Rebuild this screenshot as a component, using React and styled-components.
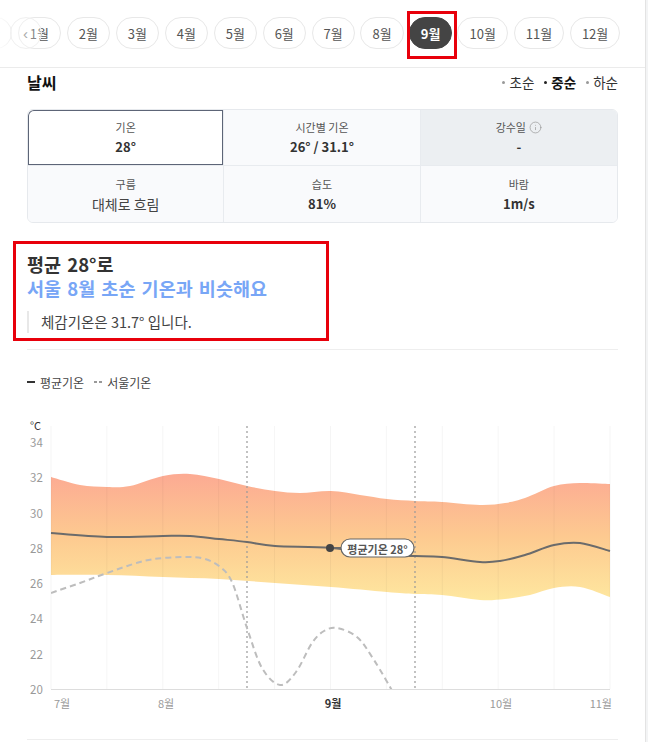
import styled, { createGlobalStyle } from "styled-components";
import { Info } from "lucide-react";

const GlobalStyle = createGlobalStyle`
  body {
    margin: 0;
    background: #f3f4f5;
    font-family: "Noto Sans CJK KR", "Noto Sans", sans-serif;
    color: #333;
  }
`;

const Page = styled.div`
  width: 645px;
  height: 742px;
  overflow: hidden;
  background: #fff;
  border-right: 1px solid #e3e3e3;
`;

const MonthBar = styled.div`
  position: relative;
  height: 67px;
  border-bottom: 1px solid #ebebeb;
  overflow: hidden;
`;

const ChipRow = styled.div`
  display: flex;
  gap: 5.6px;
  padding-top: 17px;
  margin-left: -36px;
`;

const Chip = styled.button`
  position: relative;
  flex: none;
  height: 32px;
  padding: 0 ${(p) => (p.$active ? "10.4px" : "11.1px")};
  border-radius: 16px;
  border: 1px solid ${(p) => (p.$active ? "#444" : "#e8e8e8")};
  background: ${(p) => (p.$active ? "#444" : "#fff")};
  color: ${(p) => (p.$active ? "#fff" : "#555")};
  font-family: inherit;
  font-size: 13px;
  font-weight: ${(p) => (p.$active ? 700 : 400)};
  line-height: 1;

  ${(p) =>
    p.$marked &&
    `&::after {
      content: "";
      position: absolute;
      top: -7px;
      bottom: -11px;
      left: -3px;
      right: -6px;
      border: 3px solid #e8000b;
    }`}
`;

const PrevButton = styled.button`
  position: absolute;
  left: 0;
  top: 17px;
  width: 42px;
  height: 32px;
  padding: 0 0 0 23px;
  border: none;
  background: linear-gradient(to right, rgba(255, 255, 255, 0.8) 0, rgba(255, 255, 255, 0) 20px);
  color: #aaa;
  font-size: 15px;
  display: flex;
  align-items: center;

  &::before {
    content: "";
    position: absolute;
    left: 10px;
    top: 0;
    width: 32px;
    height: 32px;
    border-radius: 50%;
    border: 1px solid #f0f0f0;
    box-sizing: border-box;
    background: rgba(255, 255, 255, 0.3);
  }
`;

const Section = styled.div`
  padding: 0 27px;
`;

const HeaderRow = styled.div`
  height: 28px;
  display: flex;
  align-items: center;
  justify-content: space-between;
`;

const Title = styled.h2`
  margin: 0;
  font-size: 16px;
  font-weight: 700;
  color: #111;
`;

const PeriodList = styled.div`
  display: flex;
  gap: 10px;
`;

const Period = styled.span`
  display: flex;
  align-items: center;
  gap: 4px;
  font-size: 13.5px;
  color: ${(p) => (p.$active ? "#111" : "#333")};
  font-weight: ${(p) => (p.$active ? 700 : 400)};

  &::before {
    content: "";
    width: 3px;
    height: 3px;
    border-radius: 50%;
    background: ${(p) => (p.$active ? "#222" : "#999")};
  }
`;

const Table = styled.div`
  margin-top: 13px;
  display: grid;
  grid-template-columns: repeat(3, 1fr);
  grid-auto-rows: 56px;
  border: 1px solid #e6e9ed;
  border-radius: 6px;
  overflow: hidden;
`;

const Cell = styled.div`
  display: flex;
  flex-direction: column;
  align-items: center;
  justify-content: center;
  gap: 3px;
  background: ${(p) => (p.$selected ? "#fff" : p.$dim ? "#eceff2" : "#f9fafc")};
  border-right: ${(p) => (p.$last ? "none" : "1px solid #e8ebef")};
  border-bottom: ${(p) => (p.$bottom ? "none" : "1px solid #e8ebef")};
  box-shadow: ${(p) => (p.$selected ? "inset 0 0 0 1px #5d6577" : "none")};
  border-top-left-radius: ${(p) => (p.$selected ? "6px" : "0")};
`;

const CellLabel = styled.span`
  display: flex;
  align-items: center;
  gap: 3px;
  font-size: 11px;
  color: #555;
  line-height: 16px;
`;

const CellValue = styled.span`
  font-size: ${(p) => (p.$plain ? "14px" : "13px")};
  font-weight: ${(p) => (p.$plain ? 400 : 700)};
  color: ${(p) => (p.$plain ? "#444" : "#333")};
  line-height: 18px;
`;

const Summary = styled.div`
  box-sizing: border-box;
  width: 316px;
  height: 100px;
  margin: 18px 0 0 -14px;
  padding: 8px 0 5px 11px;
  border: 3px solid #e8000b;
`;

const SummaryLine = styled.div`
  font-size: 18.5px;
  font-weight: 700;
  line-height: 24px;
  word-spacing: 2px;
  color: ${(p) => (p.$accent ? "#78a6f6" : "#333")};
  white-space: nowrap;
`;

const Quote = styled.div`
  margin-top: 11px;
  padding-left: 12px;
  border-left: 2px solid #e8e8e8;
  font-size: 14.5px;
  line-height: 22px;
  color: #444;
`;

const Divider = styled.div`
  height: 1px;
  background: #eeeeee;
  margin-top: ${(p) => p.$gap}px;
`;

const Legend = styled.div`
  margin-top: 24px;
  height: 16px;
  display: flex;
  align-items: center;
  gap: 10px;
  font-size: 12px;
  color: #444;
`;

const LegendItem = styled.span`
  display: flex;
  align-items: center;
  gap: 5px;

  &::before {
    content: "";
    width: 8px;
    height: 2px;
    background: ${(p) =>
      p.$dashed
        ? "repeating-linear-gradient(to right, #999 0 3px, transparent 3px 5px)"
        : "#333"};
  }
`;

const ChartSvg = styled.svg`
  display: block;
  margin-top: 25px;
  font-family: "Noto Sans CJK KR", "Noto Sans", sans-serif;
`;

function smooth(pts, start = "M") {
  let d = `${start}${pts[0][0]},${pts[0][1]}`;
  for (let i = 0; i < pts.length - 1; i++) {
    const p0 = pts[i - 1] || pts[i];
    const p1 = pts[i];
    const p2 = pts[i + 1];
    const p3 = pts[i + 2] || p2;
    const c1x = p1[0] + (p2[0] - p0[0]) / 6;
    const c1y = p1[1] + (p2[1] - p0[1]) / 6;
    const c2x = p2[0] - (p3[0] - p1[0]) / 6;
    const c2y = p2[1] - (p3[1] - p1[1]) / 6;
    d += ` C${c1x.toFixed(1)},${c1y.toFixed(1)} ${c2x.toFixed(1)},${c2y.toFixed(1)} ${p2[0]},${p2[1]}`;
  }
  return d;
}

const upper = [
  [51, 477], [80, 485], [107, 487], [130, 486], [163, 476], [190, 474], [219, 479],
  [247, 486], [275, 491], [300, 493], [331, 491], [360, 495], [387, 499], [415, 501],
  [442, 502], [480, 505], [505, 503], [525, 498], [554, 486], [580, 483], [610, 484],
];
const lower = [
  [51, 575], [107, 575], [163, 577], [219, 579], [275, 583], [331, 587], [387, 592],
  [415, 594], [442, 595], [480, 600], [505, 599], [530, 595], [554, 588], [580, 587],
  [610, 597],
];
const mean = [
  [51, 533], [107, 537], [163, 536], [190, 536], [219, 539], [247, 542], [275, 546],
  [331, 548], [387, 555], [415, 556], [442, 557], [480, 562], [500, 561], [525, 555],
  [554, 545], [580, 543], [610, 551],
];
const seoul = [
  [51, 593], [80, 583], [107, 573], [140, 562], [163, 558], [190, 557], [205, 559],
  [219, 566], [232, 582], [247, 628], [262, 668], [280, 685], [296, 672], [312, 643],
  [324, 631], [337, 628], [357, 637], [374, 660], [394, 694],
];

const yTicks = [34, 32, 30, 28, 26, 24, 22, 20];
const yOf = (t) => 689 - (t - 20) * 17.64;
const gridX = Array.from({ length: 11 }, (_, i) => 51 + i * 55.9);

const xLabels = [
  { text: "7월", x: 54, anchor: "start" },
  { text: "8월", x: 166, anchor: "middle" },
  { text: "9월", x: 333, anchor: "middle", bold: true },
  { text: "10월", x: 501, anchor: "middle" },
  { text: "11월", x: 612, anchor: "end" },
];

function TempChart() {
  const band = smooth(upper) + " " + smooth([...lower].reverse(), "L") + " Z";
  return (
    <ChartSvg width="591" height="300" viewBox="27 415 591 300">
      <defs>
        <linearGradient id="band" x1="0" y1="474" x2="0" y2="600" gradientUnits="userSpaceOnUse">
          <stop offset="0%" stopColor="#fcaa93" />
          <stop offset="50%" stopColor="#fdca90" />
          <stop offset="100%" stopColor="#fee79f" />
        </linearGradient>
        <clipPath id="plot">
          <rect x="51" y="420" width="559" height="269" />
        </clipPath>
      </defs>

      <text x="30" y="425" fontSize="11" fill="#333" dominantBaseline="central">
        °C
      </text>
      {yTicks.map((t) => (
        <text key={t} x="30" y={yOf(t)} fontSize="11.5" fill="#999" dominantBaseline="central">
          {t}
        </text>
      ))}

      <path d={band} fill="url(#band)" />

      {gridX.map((x) => (
        <line key={x} x1={x} x2={x} y1="426" y2="689" stroke="rgba(0,0,0,0.04)" strokeWidth="1" />
      ))}

      <line x1="247" x2="247" y1="426" y2="689" stroke="#999" strokeWidth="1.2" strokeDasharray="2 3" />
      <line x1="415" x2="415" y1="426" y2="689" stroke="#999" strokeWidth="1.2" strokeDasharray="2 3" />

      <g clipPath="url(#plot)">
        <path d={smooth(seoul)} fill="none" stroke="#bdbdbd" strokeWidth="2" strokeDasharray="6 4" />
      </g>
      <path d={smooth(mean)} fill="none" stroke="#6b6b6b" strokeWidth="2" />

      <line x1="51" x2="610" y1="689.5" y2="689.5" stroke="#dddddd" strokeWidth="1" />

      <circle cx="330" cy="548" r="4" fill="#444" />
      <line x1="334" x2="341" y1="548" y2="548" stroke="#6b6b6b" strokeWidth="2" />
      <rect x="341" y="539" width="73" height="18" rx="9" fill="#fff" stroke="#666" strokeWidth="1.2" />
      <text x="377.5" y="548.5" fontSize="11" fontWeight="700" fill="#555" textAnchor="middle" dominantBaseline="central">
        평균기온 28°
      </text>

      {xLabels.map((l) => (
        <text
          key={l.text}
          x={l.x}
          y="703"
          fontSize="11"
          fill={l.bold ? "#333" : "#999"}
          fontWeight={l.bold ? 700 : 400}
          textAnchor={l.anchor}
          dominantBaseline="central"
        >
          {l.text}
        </text>
      ))}
    </ChartSvg>
  );
}

const months = ["연간", "1월", "2월", "3월", "4월", "5월", "6월", "7월", "8월", "9월", "10월", "11월", "12월"];

export default function App() {
  return (
    <>
      <GlobalStyle />
      <Page>
        <MonthBar>
          <ChipRow>
            {months.map((m) => (
              <Chip key={m} $active={m === "9월"} $marked={m === "9월"}>
                {m}
              </Chip>
            ))}
          </ChipRow>
          <PrevButton aria-label="이전">
            <span style={{ position: "relative" }}>‹</span>
          </PrevButton>
        </MonthBar>

        <Section>
          <HeaderRow>
            <Title>날씨</Title>
            <PeriodList>
              <Period>초순</Period>
              <Period $active>중순</Period>
              <Period>하순</Period>
            </PeriodList>
          </HeaderRow>

          <Table>
            <Cell $selected>
              <CellLabel>기온</CellLabel>
              <CellValue>28°</CellValue>
            </Cell>
            <Cell>
              <CellLabel>시간별 기온</CellLabel>
              <CellValue>26° / 31.1°</CellValue>
            </Cell>
            <Cell $dim $last>
              <CellLabel>
                강수일 <Info size={13} strokeWidth={1.3} color="#999" />
              </CellLabel>
              <CellValue>-</CellValue>
            </Cell>
            <Cell $bottom>
              <CellLabel>구름</CellLabel>
              <CellValue $plain>대체로 흐림</CellValue>
            </Cell>
            <Cell $bottom>
              <CellLabel>습도</CellLabel>
              <CellValue>81%</CellValue>
            </Cell>
            <Cell $bottom $last>
              <CellLabel>바람</CellLabel>
              <CellValue>1m/s</CellValue>
            </Cell>
          </Table>

          <Summary>
            <SummaryLine>평균 28°로</SummaryLine>
            <SummaryLine $accent>서울 8월 초순 기온과 비슷해요</SummaryLine>
            <Quote>체감기온은 31.7° 입니다.</Quote>
          </Summary>

          <Divider $gap={8} />

          <Legend>
            <LegendItem>평균기온</LegendItem>
            <LegendItem $dashed>서울기온</LegendItem>
          </Legend>

          <TempChart />

          <Divider $gap={24} />
        </Section>
      </Page>
    </>
  );
}
